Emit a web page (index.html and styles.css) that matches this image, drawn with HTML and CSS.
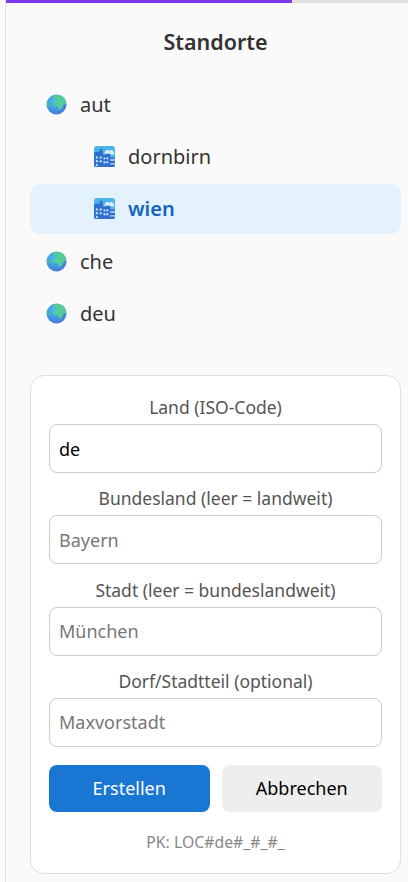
FILE: index.html
```html
<!DOCTYPE html>
<html lang="en">
<head>
    <meta charset="UTF-8">
    <meta name="viewport" content="width=device-width, initial-scale=1.0">
    <title>Standorte</title>
    <link rel="stylesheet" href="styles.css">
</head>
<body>

<svg class="defs" width="0" height="0">
    <defs>
        <radialGradient id="ocean" cx="0.4" cy="0.35" r="0.8">
            <stop offset="0" stop-color="#4bc0ec"/>
            <stop offset="0.6" stop-color="#3f8fe0"/>
            <stop offset="1" stop-color="#5a66cc"/>
        </radialGradient>
        <symbol id="globe" viewBox="0 0 22 22">
            <circle cx="11" cy="11" r="10.5" fill="url(#ocean)"/>
            <path d="M7 2 C10 0.5 15 0.5 18 3 C20 5 21 8 21 11 C19 10 18 11 17.5 13 C16.5 15.5 15 16 14 17 C13 15 13 13 11.5 12.5 C9.5 13 7.5 12 7.5 10 C8 8 10 8 11 7 C9.5 5.5 7.5 4.5 7 2 Z" fill="#55cc98"/>
            <path d="M1 9 C3 8.5 4.5 10 4 12 C3 13 2 13 1 12 Z" fill="#4fb890"/>
        </symbol>
        <symbol id="city" viewBox="0 0 22 22">
            <rect x="0" y="0" width="22" height="22" rx="3" fill="#4db4ea"/>
            <path d="M11 7 a3 3 0 0 1 5 -2 a3 3 0 0 1 5 2 v2 h-10 Z" fill="#d8ecfa"/>
            <path d="M0 20 V7 l3 -1 h3 V3 h3 V9 h3 V8 h5 V12 H22 V20 a2 2 0 0 1 -2 2 H2 a2 2 0 0 1 -2 -2 Z" fill="#2f6fd0"/>
            <path d="M2 11 h2 v2 h-2 Z M2 15 h2 v2 h-2 Z M2 19 h2 v2 h-2 Z M6 11 h2 v2 h-2 Z M6 15 h2 v2 h-2 Z M10 12 h2 v2 h-2 Z M13 12 h2 v2 h-2 Z M10 16 h2 v2 h-2 Z M13 16 h2 v2 h-2 Z" fill="#d5ecfa"/>
            <path d="M17 14 h5 v1.5 h-5 Z M17 18 h5 v1.5 h-5 Z" fill="#bfe0f4"/>
        </symbol>
    </defs>
</svg>

<aside class="sidebar">
    <div class="progress"><div class="progress-fill"></div></div>

    <h1>Standorte</h1>

    <ul class="tree">
        <li class="tree-item">
            <svg class="tree-icon"><use href="#globe"/></svg>
            <span>aut</span>
        </li>
        <li class="tree-item child">
            <svg class="tree-icon"><use href="#city"/></svg>
            <span>dornbirn</span>
        </li>
        <li class="tree-item child active">
            <svg class="tree-icon"><use href="#city"/></svg>
            <span>wien</span>
        </li>
        <li class="tree-item">
            <svg class="tree-icon"><use href="#globe"/></svg>
            <span>che</span>
        </li>
        <li class="tree-item">
            <svg class="tree-icon"><use href="#globe"/></svg>
            <span>deu</span>
        </li>
    </ul>

    <form class="location-form">
        <label class="field">
            <span>Land (ISO-Code)</span>
            <input type="text" value="de">
        </label>
        <label class="field">
            <span>Bundesland (leer = landweit)</span>
            <input type="text" placeholder="Bayern">
        </label>
        <label class="field">
            <span>Stadt (leer = bundeslandweit)</span>
            <input type="text" placeholder="München">
        </label>
        <label class="field">
            <span>Dorf/Stadtteil (optional)</span>
            <input type="text" placeholder="Maxvorstadt">
        </label>
        <div class="actions">
            <button type="button" class="btn btn-primary">Erstellen</button>
            <button type="button" class="btn btn-secondary">Abbrechen</button>
        </div>
        <p class="pk">PK: LOC#de#_#_#_</p>
    </form>
</aside>

</body>
</html>
```

FILE: styles.css
```css
* {
    box-sizing: border-box;
}

body {
    margin: 0;
    height: 882px;
    overflow: hidden;
    background-color: #fff;
    font-family: "Noto Sans", "Open Sans", sans-serif;
    color: #333;
}

.defs {
    display: block;
    height: 0;
}

.sidebar {
    margin-left: 5px;
    height: 882px;
    background-color: #fafafa;
    border-left: 1px solid #e0e0e0;
}

.progress {
    height: 3px;
    background-color: #e0e0e0;
}

.progress-fill {
    width: 286px;
    height: 3px;
    background-color: #7c3aed;
}

h1 {
    margin: 0;
    padding-top: 24px;
    height: 69px;
    text-align: center;
    font-size: 21.5px;
    line-height: 30px;
    font-weight: 600;
    padding-left: 17px;
}

.tree {
    list-style: none;
    margin: 7px 7px 0 24px;
    padding: 0;
}

.tree-item {
    display: flex;
    align-items: center;
    gap: 13px;
    height: 50px;
    margin-bottom: 2.25px;
    padding-left: 16px;
    border-radius: 10px;
    font-size: 20px;
}

.tree-item.child {
    padding-left: 64px;
}

.tree-item.active {
    margin-bottom: 3px;
    background-color: #e3f2fd;
    color: #1565c0;
    font-weight: 600;
}

.tree-icon {
    width: 21px;
    height: 21px;
    flex-shrink: 0;
}

.location-form {
    margin: 36.25px 7px 0 24px;
    height: 499px;
    padding: 17px 18px 0;
    background-color: #fff;
    border: 1px solid #e0e0e0;
    border-radius: 14px;
}

.field {
    display: block;
    margin-bottom: 11.33px;
    text-align: center;
    font-size: 17.5px;
    color: #555;
}

.field span {
    display: block;
    height: 31px;
    line-height: 28px;
}

.field input {
    display: block;
    width: 100%;
    height: 49px;
    padding: 0 9px;
    border: 1px solid #ccc;
    border-radius: 8px;
    background-color: #fff;
    color: #000;
    font-family: inherit;
    font-size: 18px;
}

.field input::placeholder {
    color: #777;
}

.actions {
    display: flex;
    gap: 12px;
    margin-top: 18px;
}

.btn {
    flex: 1;
    height: 47px;
    border: none;
    border-radius: 8px;
    font-family: inherit;
    font-size: 18px;
}

.btn-primary {
    background-color: #1976d2;
    color: #fff;
}

.btn-secondary {
    background-color: #eee;
    color: #000;
}

.pk {
    margin: 20px 0 0;
    text-align: center;
    font-size: 15.8px;
    line-height: 20px;
    color: #888;
}
```
